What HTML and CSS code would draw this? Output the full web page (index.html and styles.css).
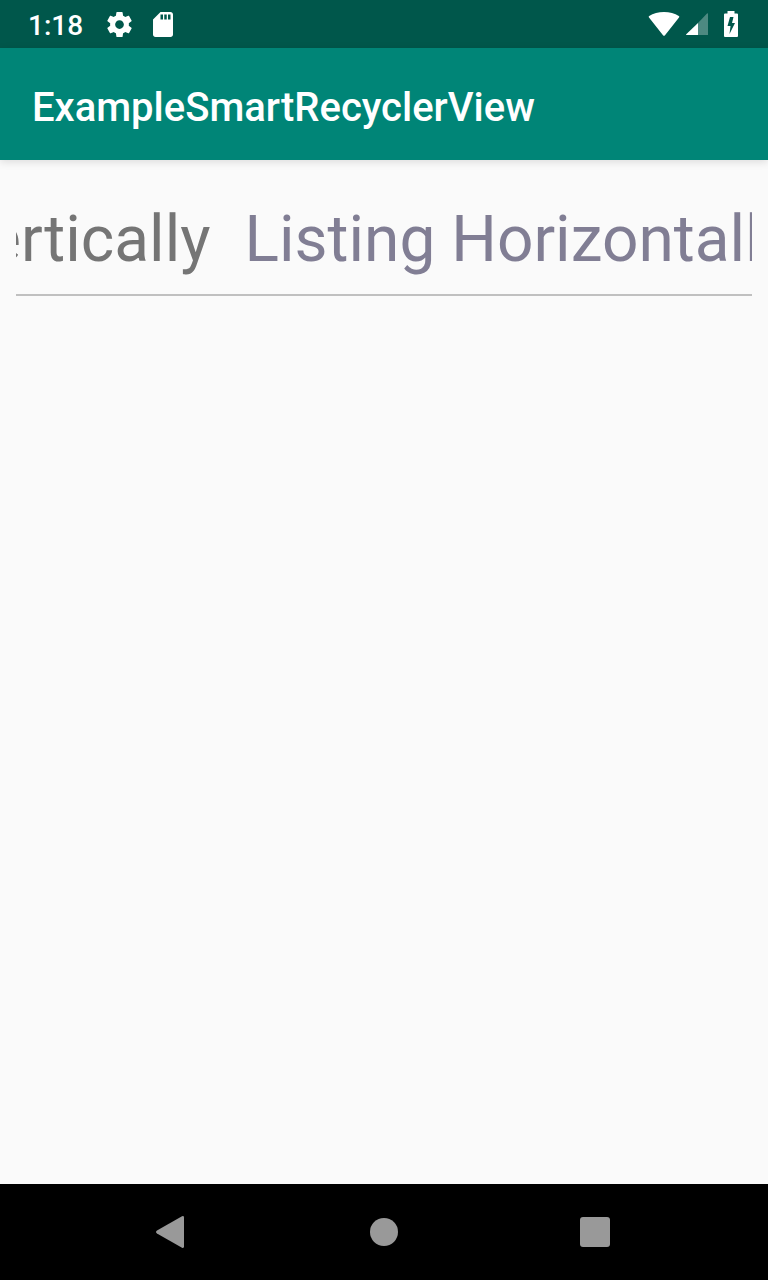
FILE: index.html
```html
<!DOCTYPE html>
<html lang="en">
<head>
<meta charset="utf-8">
<meta name="viewport" content="width=device-width, initial-scale=1">
<title>ExampleSmartRecyclerView</title>
<link rel="stylesheet" href="styles.css">
</head>
<body>
<div class="screen">
  <div class="status-bar">
    <div class="status-left">
      <span class="clock">1:18</span>
      <svg class="gear" viewBox="2 2 20 20" aria-hidden="true"><path fill="#fff" d="M19.43 12.98c.04-.32.07-.64.07-.98s-.03-.66-.07-.98l2.11-1.65c.19-.15.24-.42.12-.64l-2-3.46c-.12-.22-.39-.3-.61-.22l-2.49 1c-.52-.4-1.08-.73-1.69-.98l-.38-2.65C14.46 2.18 14.25 2 14 2h-4c-.25 0-.46.18-.49.42l-.38 2.65c-.61.25-1.17.59-1.69.98l-2.49-1c-.23-.09-.49 0-.61.22l-2 3.46c-.13.22-.07.49.12.64l2.11 1.65c-.04.32-.07.65-.07.98s.03.66.07.98l-2.11 1.65c-.19.15-.24.42-.12.64l2 3.46c.12.22.39.3.61.22l2.49-1c.52.4 1.08.73 1.69.98l.38 2.65c.03.24.24.42.49.42h4c.25 0 .46-.18.49-.42l.38-2.65c.61-.25 1.17-.59 1.69-.98l2.49 1c.23.09.49 0 .61-.22l2-3.46c.12-.22.07-.49-.12-.64l-2.11-1.65zM12 15.500c-1.930 0-3.500-1.570-3.500-3.500s1.570-3.500 3.500-3.500 3.500 1.570 3.500 3.500-1.570 3.500-3.500 3.500z"/></svg>
      <svg class="card" viewBox="4 2 16 20" preserveAspectRatio="none" aria-hidden="true"><path fill="#fff" d="M18 2h-8L4.020 8 4 20c0 1.100.9 2 2 2h12c1.100 0 2-.9 2-2V4c0-1.100-.9-2-2-2zm-6 6h-2V4h2v4zm3 0h-2V4h2v4zm3 0h-2V4h2v4z"/></svg>
    </div>
    <div class="status-right">
      <svg class="wifi" viewBox="0 0 32 24" aria-hidden="true"><path fill="#fff" d="M1 5.500Q.2 4.700 1.200 4C9-1.200 23-1.200 30.800 4q1 .7.2 1.500L17 23.200q-1 1.200-2 0z"/></svg>
      <svg class="signal" viewBox="0 0 22 22" aria-hidden="true"><path fill="#fff" fill-opacity=".3" d="M12 10L21 .6q1-.9 1 .4v21H12z"/><path fill="#fff" d="M12 10v12H1q-1.500 0-.5-1z"/></svg>
      <svg class="battery" viewBox="0 0 14 26" aria-hidden="true"><path fill="#fff" fill-rule="evenodd" d="M3.500 0h7v2.500H13q1 0 1 1V25q0 1-1 1H1q-1 0-1-1V3.500q0-1 1-1h2.500zM9.500 6H6L3.500 15H6.500L5.500 23L11 12H8z"/></svg>
    </div>
  </div>
  <header class="app-bar"><h1 class="title">ExampleSmartRecyclerView</h1></header>
  <main class="content">
    <nav class="strip" aria-label="Listings">
      <a class="item item-vertical" href="#vertical">Listing Vertically</a>
      <a class="item item-horizontal" href="#horizontal">Listing Horizontally</a>
    </nav>
  </main>
  <div class="nav-bar">
    <button class="nav-button" type="button" aria-label="Back"><svg class="back" viewBox="0 0 34 32" aria-hidden="true"><path fill="#999" d="M28 1.500v29q0 2-2 1.300L1 17.500q-2-1.500 0-3L26 .2q2-.7 2 1.300z"/></svg></button>
    <button class="nav-button" type="button" aria-label="Home"><span class="home"></span></button>
    <button class="nav-button" type="button" aria-label="Recent apps"><span class="recents"></span></button>
  </div>
</div>
</body>
</html>
```
FILE: styles.css
```css
* { box-sizing: border-box; }
body {
  margin: 0;
  background: #fafafa;
  font-family: Roboto, "Liberation Sans", sans-serif;
}
svg { display: block; }
.screen {
  display: flex;
  flex-direction: column;
  min-height: 100vh;
}
.status-bar {
  display: flex;
  align-items: center;
  justify-content: space-between;
  height: 48px;
  padding: 0 30px 0 28px;
  background: #00574b;
  color: #fff;
}
.status-left, .status-right { display: flex; align-items: center; }
.clock {
  margin-right: 24px;
  padding-top: 4px;
  font-size: 28px;
  font-weight: 500;
  line-height: 44px;
}
.gear { width: 25px; height: 25px; margin-right: 21px; }
.card { width: 20px; height: 25px; }
.wifi { width: 32px; height: 24px; margin-right: 6px; }
.signal { width: 22px; height: 22px; margin-right: 16px; }
.battery { width: 14px; height: 26px; }
.app-bar {
  display: flex;
  align-items: center;
  height: 112px;
  padding: 8px 32px 0;
  background: #008577;
  color: #fff;
  box-shadow: 0 2px 8px rgba(0, 0, 0, 0.12);
}
.title {
  margin: 0;
  font-size: 40px;
  font-weight: 500;
  line-height: 48px;
}
.content { flex: 1; padding: 32px 16px; }
.strip {
  display: flex;
  gap: 34px;
  overflow: hidden;
  padding: 8px 0 14px;
  border-bottom: 2px solid #c0c0c0;
}
.item {
  flex: none;
  font-size: 64px;
  line-height: 80px;
  text-decoration: none;
  white-space: nowrap;
}
.item-vertical { margin-left: -275px; color: #757575; }
.item-horizontal { color: #817e94; }
.nav-bar {
  display: flex;
  align-items: center;
  justify-content: center;
  height: 96px;
  background: #000;
}
.nav-button {
  display: flex;
  align-items: center;
  justify-content: center;
  width: 211px;
  height: 96px;
  padding: 0;
  border: 0;
  background: none;
}
.back { width: 34px; height: 32px; }
.home { width: 28px; height: 28px; border-radius: 50%; background: #999; }
.recents { width: 30px; height: 30px; border-radius: 3px; background: #999; }
```
